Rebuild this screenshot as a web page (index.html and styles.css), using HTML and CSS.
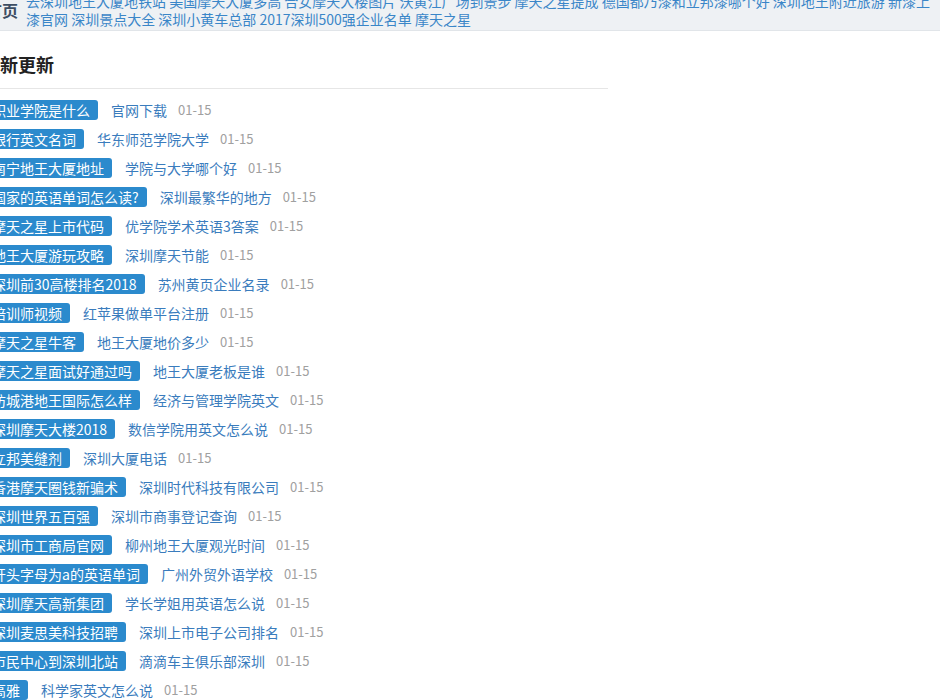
FILE: index.html
```html
<!DOCTYPE html>
<html lang="zh-CN">
<head>
<meta charset="utf-8">
<title>最新更新</title>
<link rel="stylesheet" href="styles.css">
</head>
<body>
<div class="page">
  <div class="topnav">
    <div class="home">首页</div>
    <div class="links">
      <a>去深圳地王大厦地铁站</a> <a>美国摩天大厦多高</a> <a>合女摩天大楼图片</a> <a>沃黄江广场到景步</a> <a>摩天之星提成</a> <a>德国都乃漆和立邦漆哪个好</a> <a>深圳地王附近旅游</a> <a>新漆上漆官网</a> <a>深圳景点大全</a> <a>深圳小黄车总部</a> <a>2017深圳500强企业名单</a> <a>摩天之星</a>
    </div>
  </div>
  <div class="main">
    <h2 class="title">最新更新</h2>
    <ul class="list">
      <li><span class="tag">职业学院是什么</span><a class="link">官网下载</a><span class="date">01-15</span></li>
      <li><span class="tag">银行英文名词</span><a class="link">华东师范学院大学</a><span class="date">01-15</span></li>
      <li><span class="tag">南宁地王大厦地址</span><a class="link">学院与大学哪个好</a><span class="date">01-15</span></li>
      <li><span class="tag">国家的英语单词怎么读?</span><a class="link">深圳最繁华的地方</a><span class="date">01-15</span></li>
      <li><span class="tag">摩天之星上市代码</span><a class="link">优学院学术英语3答案</a><span class="date">01-15</span></li>
      <li><span class="tag">地王大厦游玩攻略</span><a class="link">深圳摩天节能</a><span class="date">01-15</span></li>
      <li><span class="tag">深圳前30高楼排名2018</span><a class="link">苏州黄页企业名录</a><span class="date">01-15</span></li>
      <li><span class="tag">培训师视频</span><a class="link">红苹果做单平台注册</a><span class="date">01-15</span></li>
      <li><span class="tag">摩天之星牛客</span><a class="link">地王大厦地价多少</a><span class="date">01-15</span></li>
      <li><span class="tag">摩天之星面试好通过吗</span><a class="link">地王大厦老板是谁</a><span class="date">01-15</span></li>
      <li><span class="tag">防城港地王国际怎么样</span><a class="link">经济与管理学院英文</a><span class="date">01-15</span></li>
      <li><span class="tag">深圳摩天大楼2018</span><a class="link">数信学院用英文怎么说</a><span class="date">01-15</span></li>
      <li><span class="tag">立邦美缝剂</span><a class="link">深圳大厦电话</a><span class="date">01-15</span></li>
      <li><span class="tag">香港摩天圈钱新骗术</span><a class="link">深圳时代科技有限公司</a><span class="date">01-15</span></li>
      <li><span class="tag">深圳世界五百强</span><a class="link">深圳市商事登记查询</a><span class="date">01-15</span></li>
      <li><span class="tag">深圳市工商局官网</span><a class="link">柳州地王大厦观光时间</a><span class="date">01-15</span></li>
      <li><span class="tag">开头字母为a的英语单词</span><a class="link">广州外贸外语学校</a><span class="date">01-15</span></li>
      <li><span class="tag">深圳摩天高新集团</span><a class="link">学长学姐用英语怎么说</a><span class="date">01-15</span></li>
      <li><span class="tag">深圳麦思美科技招聘</span><a class="link">深圳上市电子公司排名</a><span class="date">01-15</span></li>
      <li><span class="tag">市民中心到深圳北站</span><a class="link">滴滴车主俱乐部深圳</a><span class="date">01-15</span></li>
      <li><span class="tag">高雅</span><a class="link">科学家英文怎么说</a><span class="date">01-15</span></li>
    </ul>
  </div>
</div>
</body>
</html>
```
FILE: styles.css
```css
html, body {
  margin: 0;
  padding: 0;
  background: #ffffff;
  overflow: hidden;
}
body {
  font-family: "Noto Sans CJK SC", "Noto Sans", sans-serif;
  font-size: 14px;
  color: #333;
}
a {
  text-decoration: none;
  cursor: pointer;
}
.page {
  margin-left: -18px;
  width: 958px;
}
.topnav {
  display: flex;
  align-items: flex-start;
  background: #eef1f4;
  border-bottom: 1px solid #e1e5e9;
  height: 30px;
  overflow: hidden;
}
.home {
  flex: none;
  padding-left: 4px;
  font-size: 16px;
  font-weight: bold;
  color: #3d4e63;
  line-height: 20px;
  margin-top: 0;
}
.links {
  flex: 1;
  margin-left: 8px;
  margin-top: -8px;
  font-size: 14px;
  line-height: 18px;
  color: #3a86c8;
}
.links a {
  color: #3a86c8;
}
.main {
  width: 626px;
  padding-top: 21px;
}
.title {
  margin: 0;
  font-size: 18px;
  font-weight: bold;
  line-height: 24px;
  color: #222;
  padding-bottom: 12px;
  border-bottom: 1px solid #e6e6e6;
}
.list {
  list-style: none;
  margin: 0;
  padding: 6px 0 0 0;
}
.list li {
  display: flex;
  align-items: center;
  height: 29px;
}
.tag {
  background: #2b8acd;
  color: #ffffff;
  line-height: 20px;
  padding: 0 8px 0 10px;
  border-radius: 3px;
  white-space: nowrap;
}
.link {
  margin-left: 13px;
  color: #3a7cbd;
  white-space: nowrap;
}
.date {
  margin-left: 11px;
  color: #a0a0a0;
  font-size: 13px;
}
```
